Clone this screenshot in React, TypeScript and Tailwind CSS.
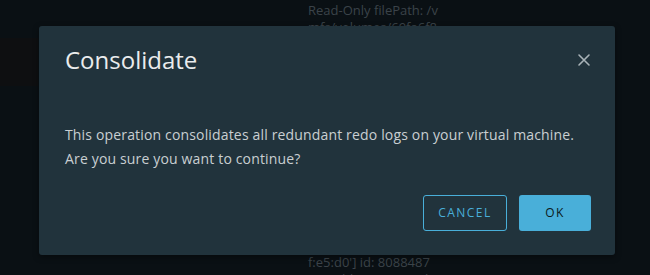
import React from 'react'

function CloseIcon() {
  return (
    <svg width="14" height="14" viewBox="0 0 14 14" fill="none" stroke="#a9b3b8" strokeWidth="1.6" strokeLinecap="round">
      <path d="M2 2 L12 12 M12 2 L2 12" />
    </svg>
  )
}

export default function App() {
  return (
    <div className="relative w-[650px] h-[275px] overflow-hidden bg-[#0a1014] font-['Open_Sans','Liberation_Sans',sans-serif]">
      {/* log text behind the modal */}
      <div className="flex flex-col justify-between h-full pl-[308px] text-[13px] leading-[17px] text-[#3b4349]">
        <div className="-mt-[15px]">
          <div>Locked: false</div>
          <div>Read-Only filePath: /v</div>
          <div>mfs/volumes/69fa6f8</div>
        </div>
        <div className="-mb-[13px]">
          <div>f:e5:d0'] id: 8088487</div>
          <div>0 worldName: vmx lo</div>
        </div>
      </div>
      <div className="absolute left-0 top-[38px] w-[38px] h-[48px] bg-[#0e0f11]" />

      {/* modal */}
      <div className="absolute left-[39px] top-[26px] w-[576px] h-[229px] rounded-[3px] bg-[#21333c] shadow-[0_2px_6px_rgba(0,0,0,0.4)] flex flex-col">
        <div className="flex items-center justify-between pt-[19px] pl-[26px] pr-[24px]">
          <h2 className="text-[24px] leading-[30px] text-[#eaeced]">Consolidate</h2>
          <CloseIcon />
        </div>
        <div className="mt-[48px] pl-[26px] text-[14px] leading-[24px] tracking-[0.16px] text-[#c9cfd2]">
          <p>This operation consolidates all redundant redo logs on your virtual machine.</p>
          <p>Are you sure you want to continue?</p>
        </div>
        <div className="mt-auto flex justify-end gap-3 pr-[24px] pb-[24px]">
          <button className="w-[84px] h-[36px] rounded-[3px] border border-[#49afd9] text-[#49afd9] text-[12px] font-medium tracking-[0.12em]">
            CANCEL
          </button>
          <button className="w-[72px] h-[36px] rounded-[3px] bg-[#49afd9] text-[#0c1a20] text-[12px] font-medium tracking-[0.12em]">
            OK
          </button>
        </div>
      </div>
    </div>
  )
}
